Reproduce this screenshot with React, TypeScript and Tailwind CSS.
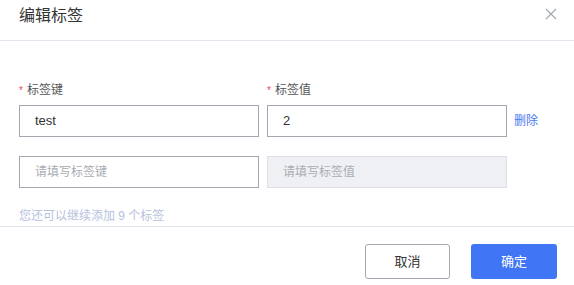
const font = { fontFamily: '"Liberation Sans", "Noto Sans CJK SC", sans-serif' };

function Field({ value, placeholder, disabled }: { value?: string; placeholder: string; disabled?: boolean }) {
  return (
    <div
      className={`h-8 w-[240px] flex items-center px-[15px] text-[12px] border ${
        disabled ? 'bg-[#eff0f4] border-[#dcdee4] text-[#a9acb3]' : 'bg-white border-[#a3a7af] text-[#333]'
      }`}
    >
      {value ? <span className="text-[13px] text-[#333]">{value}</span> : <span className="text-[#a9acb3]">{placeholder}</span>}
    </div>
  );
}

export default function App() {
  return (
    <div className="w-[574px] h-[285px] bg-white flex flex-col overflow-hidden" style={font}>
      <div className="h-[41px] border-b border-[#e4e4ee] flex items-start justify-between pl-[19px] pr-[17px] pt-[5px]">
        <span className="text-[16px] leading-[22px] text-[#333]">编辑标签</span>
        <svg width="12" height="12" viewBox="0 0 12 12" className="mt-[3px]">
          <path d="M1 1L11 11M11 1L1 11" stroke="#a0a6b0" strokeWidth="1.1" />
        </svg>
      </div>

      <div className="flex-1 px-[19px] pt-[40px] border-b border-[#e4e4ee]">
        <div className="flex gap-2 text-[12px] leading-[18px] text-[#555]">
          <div className="w-[240px]">
            <span className="text-[10px] text-[#f0465a] mr-[4px]">*</span>标签键
          </div>
          <div className="w-[240px]">
            <span className="text-[10px] text-[#f0465a] mr-[4px]">*</span>标签值
          </div>
        </div>
        <div className="flex items-center gap-2 mt-[5px]">
          <Field value="test" placeholder="请填写标签键" />
          <Field value="2" placeholder="请填写标签值" />
          <span className="ml-[-1px] text-[12px] text-[#4a7af2]">删除</span>
        </div>
        <div className="flex items-center gap-2 mt-[19px]">
          <Field placeholder="请填写标签键" />
          <Field placeholder="请填写标签值" disabled />
        </div>
        <div className="mt-[19px] text-[12px] leading-[18px] text-[#b5c2dd]">您还可以继续添加 9 个标签</div>
      </div>

      <div className="h-[58px] flex justify-end items-start gap-[21px] pt-[17px] pr-[17px]">
        <button className="w-[85px] h-[35px] rounded-[3px] border border-[#a3a7af] bg-white text-[13px] text-[#333]">取消</button>
        <button className="w-[86px] h-[35px] rounded-[3px] bg-[#4075f6] text-[13px] text-white">确定</button>
      </div>
    </div>
  );
}
